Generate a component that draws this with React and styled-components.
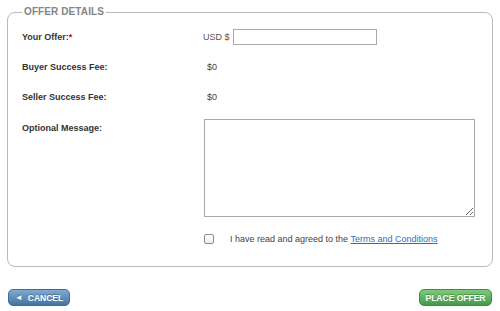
import React, { useState } from "react";
import styled, { createGlobalStyle } from "styled-components";

const GlobalStyle = createGlobalStyle`
  html, body {
    margin: 0;
    padding: 0;
    background: #ffffff;
    font-family: "Liberation Sans", Arial, Helvetica, sans-serif;
  }
`;

const OfferForm = () => {
  const [offer, setOffer] = useState("");
  const [message, setMessage] = useState("");
  const [agreed, setAgreed] = useState(false);

  return (
    <Page>
      <GlobalStyle />
      <Details>
        <Legend>OFFER DETAILS</Legend>
        <Grid>
          <Label>
            Your Offer:<Req>*</Req>
          </Label>
          <Value>
            <Currency>USD $</Currency>
            <OfferInput
              type="text"
              value={offer}
              onChange={(e) => setOffer(e.target.value)}
            />
          </Value>

          <Label>Buyer Success Fee:</Label>
          <Value>
            <Amount>$0</Amount>
          </Value>

          <Label>Seller Success Fee:</Label>
          <Value>
            <Amount>$0</Amount>
          </Value>

          <Label $top>Optional Message:</Label>
          <Value>
            <Message
              value={message}
              onChange={(e) => setMessage(e.target.value)}
            />
          </Value>

          <span />
          <AgreeRow>
            <Check
              type="checkbox"
              checked={agreed}
              onChange={() => setAgreed(!agreed)}
            />
            <AgreeText>
              I have read and agreed to the <TermsLink href="#">Terms and Conditions</TermsLink>
            </AgreeText>
          </AgreeRow>
        </Grid>
      </Details>
      <Actions>
        <Button $variant="cancel" type="button">
          <Arrow>◄</Arrow>CANCEL
        </Button>
        <Button $variant="place" type="button">
          PLACE OFFER
        </Button>
      </Actions>
    </Page>
  );
};

const Page = styled.div`
  width: 500px;
  height: 311px;
  padding: 6px 7px 0 7px;
  box-sizing: border-box;
`;

const Details = styled.fieldset`
  margin: 0;
  padding: 10px 14px 21px 14px;
  border: 1px solid #b9b9b9;
  border-radius: 8px;
  height: 261px;
  box-sizing: border-box;
`;

const Legend = styled.legend`
  margin-left: 0;
  padding: 0 2px;
  font-size: 10px;
  line-height: 12px;
  font-weight: bold;
  color: #858585;
  letter-spacing: 0.1px;
`;

const Grid = styled.div`
  display: grid;
  grid-template-columns: 181px 1fr;
  grid-template-rows: 17px 16px 16px auto auto;
  row-gap: 14px;
`;

const Label = styled.div`
  font-size: 9px;
  font-weight: bold;
  color: #333333;
  display: flex;
  align-items: ${(p) => (p.$top ? "flex-start" : "center")};
  padding-top: ${(p) => (p.$top ? "4px" : "0")};
`;

const Req = styled.span`
  color: #d0021b;
`;

const Value = styled.div`
  display: flex;
  align-items: center;
`;

const Currency = styled.span`
  font-size: 9px;
  color: #555555;
  margin-right: 3px;
`;

const OfferInput = styled.input`
  width: 144px;
  height: 16px;
  box-sizing: border-box;
  border: 1px solid #a9a9a9;
  padding: 0 3px;
  font-size: 9px;
  outline: none;
`;

const Amount = styled.span`
  font-size: 9px;
  color: #444444;
  padding-left: 4px;
`;

const Message = styled.textarea`
  width: 271px;
  height: 98px;
  box-sizing: border-box;
  border: 1px solid #a9a9a9;
  margin: 0 0 0 1px;
  font-size: 9px;
  font-family: inherit;
  outline: none;
`;

const AgreeRow = styled.div`
  display: flex;
  align-items: center;
  margin-top: 3px;
  padding-left: 1px;
`;

const Check = styled.input`
  appearance: none;
  width: 10px;
  height: 10px;
  margin: 0 16px 0 0;
  border: 1px solid #8f8f8f;
  border-radius: 2px;
  background: linear-gradient(#ffffff, #ececec);
  box-sizing: border-box;
  &:checked {
    background: #4a78a8;
  }
`;

const AgreeText = styled.span`
  font-size: 9px;
  color: #444444;
`;

const TermsLink = styled.a`
  color: #2c6fbf;
  text-decoration: underline;
`;

const Actions = styled.div`
  display: flex;
  justify-content: space-between;
  margin-top: 22px;
  padding: 0 1px;
`;

const Button = styled.button`
  height: 17px;
  padding: 0;
  width: ${(p) => (p.$variant === "place" ? "73px" : "62px")};
  border-radius: 5px;
  border: 1px solid ${(p) => (p.$variant === "place" ? "#3d8a43" : "#3e6a97")};
  background: ${(p) =>
    p.$variant === "place"
      ? "linear-gradient(#7ccb7c, #45994b)"
      : "linear-gradient(#7eaad3, #47749f)"};
  color: #ffffff;
  font-family: "Liberation Sans", Arial, sans-serif;
  font-size: 8.5px;
  font-weight: bold;
  text-shadow: 0 -1px 0 rgba(0, 0, 0, 0.25);
  display: flex;
  align-items: center;
  justify-content: center;
  box-sizing: border-box;
  cursor: pointer;
`;

const Arrow = styled.span`
  font-size: 8px;
  margin-right: 5px;
`;

export default OfferForm;
